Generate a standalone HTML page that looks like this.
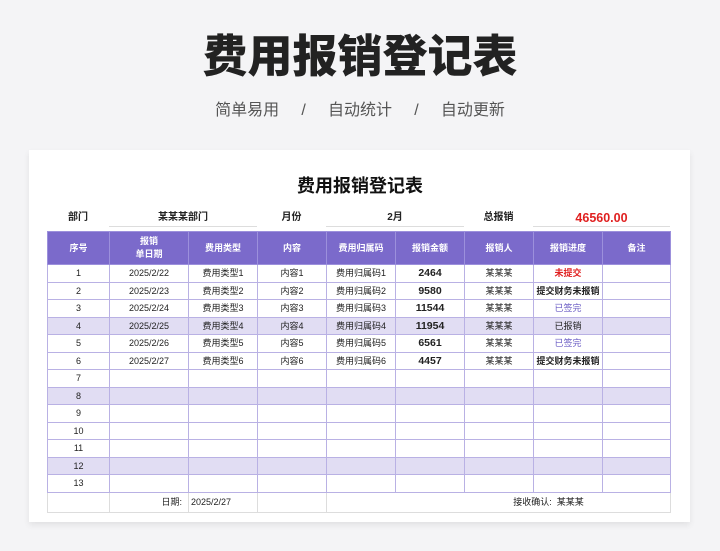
<!DOCTYPE html>
<html><head><meta charset="utf-8"><style>
*{margin:0;padding:0;box-sizing:border-box}
body{width:720px;height:551px;background:#f4f4f6;font-family:"Liberation Sans","Noto Sans CJK SC",sans-serif;position:relative;overflow:hidden;color:#222}
.t1{position:absolute;top:29px;left:0;width:720px;text-align:center;font-size:45px;font-weight:900;color:#222;line-height:56px}
.t2{position:absolute;top:100px;left:0;width:720px;text-align:center;font-size:16px;color:#555;line-height:22px}
.card{position:absolute;left:29px;top:150px;width:661px;height:372px;background:#fff;box-shadow:0 3px 6px rgba(0,0,0,.08)}
.ct{position:absolute;top:172px;left:0;width:720px;text-align:center;font-size:18px;font-weight:bold;color:#111}
.info{position:absolute;top:210px;font-size:10px;font-weight:bold;text-align:center;height:17px;line-height:16px}
.line{border-bottom:1px solid #ddd}
table{position:absolute;left:47px;top:231px;border-collapse:collapse;table-layout:fixed;font-size:9px}
td{border:1px solid #b9b1e4;text-align:center;height:17.5px;line-height:16px;padding:0;white-space:nowrap;overflow:hidden}
tbody.m{border:1.5px solid #7b6acb}
tr.h td{background:#7b6acb;color:#fff;font-weight:bold;height:33px;border-color:#9c90dc;line-height:13px}
tr.s td{background:#e1ddf3}
.b{font-weight:bold;font-size:10.5px}
.r{color:#e02020;font-weight:bold}
.p{color:#6a5cc4}
tr.f td{border:1px solid #ddd;height:20px;background:#fff}
</style></head><body>
<div class="t1">费用报销登记表</div>
<div class="t2">简单易用&nbsp;&nbsp;&nbsp;&nbsp;&nbsp;/&nbsp;&nbsp;&nbsp;&nbsp;&nbsp;自动统计&nbsp;&nbsp;&nbsp;&nbsp;&nbsp;/&nbsp;&nbsp;&nbsp;&nbsp;&nbsp;自动更新</div>
<div class="card"></div>
<div class="ct">费用报销登记表</div>
<div class="info" style="left:47px;width:62px">部门</div>
<div class="info line" style="left:109px;width:148px">某某某部门</div>
<div class="info" style="left:257px;width:69px">月份</div>
<div class="info line" style="left:326px;width:138px">2月</div>
<div class="info" style="left:464px;width:69px">总报销</div>
<div class="info line" style="left:533px;width:137px;color:#e02020;font-size:12.5px">46560.00</div>
<table>
<colgroup><col style="width:62px"><col style="width:79px"><col style="width:69px"><col style="width:69px"><col style="width:69px"><col style="width:69px"><col style="width:69px"><col style="width:69px"><col style="width:68px"></colgroup>
<tbody class="m">
<tr class="h"><td>序号</td><td>报销<br>单日期</td><td>费用类型</td><td>内容</td><td>费用归属码</td><td>报销金额</td><td>报销人</td><td>报销进度</td><td>备注</td></tr>
<tr><td>1</td><td>2025/2/22</td><td>费用类型1</td><td>内容1</td><td>费用归属码1</td><td class="b">2464</td><td>某某某</td><td class="r">未提交</td><td></td></tr>
<tr><td>2</td><td>2025/2/23</td><td>费用类型2</td><td>内容2</td><td>费用归属码2</td><td class="b">9580</td><td>某某某</td><td style="font-weight:bold">提交财务未报销</td><td></td></tr>
<tr><td>3</td><td>2025/2/24</td><td>费用类型3</td><td>内容3</td><td>费用归属码3</td><td class="b">11544</td><td>某某某</td><td class="p">已签完</td><td></td></tr>
<tr class="s"><td>4</td><td>2025/2/25</td><td>费用类型4</td><td>内容4</td><td>费用归属码4</td><td class="b">11954</td><td>某某某</td><td>已报销</td><td></td></tr>
<tr><td>5</td><td>2025/2/26</td><td>费用类型5</td><td>内容5</td><td>费用归属码5</td><td class="b">6561</td><td>某某某</td><td class="p">已签完</td><td></td></tr>
<tr><td>6</td><td>2025/2/27</td><td>费用类型6</td><td>内容6</td><td>费用归属码6</td><td class="b">4457</td><td>某某某</td><td style="font-weight:bold">提交财务未报销</td><td></td></tr>
<tr><td>7</td><td></td><td></td><td></td><td></td><td></td><td></td><td></td><td></td></tr>
<tr class="s"><td>8</td><td></td><td></td><td></td><td></td><td></td><td></td><td></td><td></td></tr>
<tr><td>9</td><td></td><td></td><td></td><td></td><td></td><td></td><td></td><td></td></tr>
<tr><td>10</td><td></td><td></td><td></td><td></td><td></td><td></td><td></td><td></td></tr>
<tr><td>11</td><td></td><td></td><td></td><td></td><td></td><td></td><td></td><td></td></tr>
<tr class="s"><td>12</td><td></td><td></td><td></td><td></td><td></td><td></td><td></td><td></td></tr>
<tr><td>13</td><td></td><td></td><td></td><td></td><td></td><td></td><td></td><td></td></tr>
</tbody>
<tbody>
<tr class="f"><td></td><td style="text-align:right;padding-right:6px">日期:</td><td style="text-align:left;padding-left:2px">2025/2/27</td><td></td><td colspan="5" style="padding-left:100px">接收确认:&nbsp;&nbsp;某某某</td></tr>
</tbody>
</table>
</body></html>
